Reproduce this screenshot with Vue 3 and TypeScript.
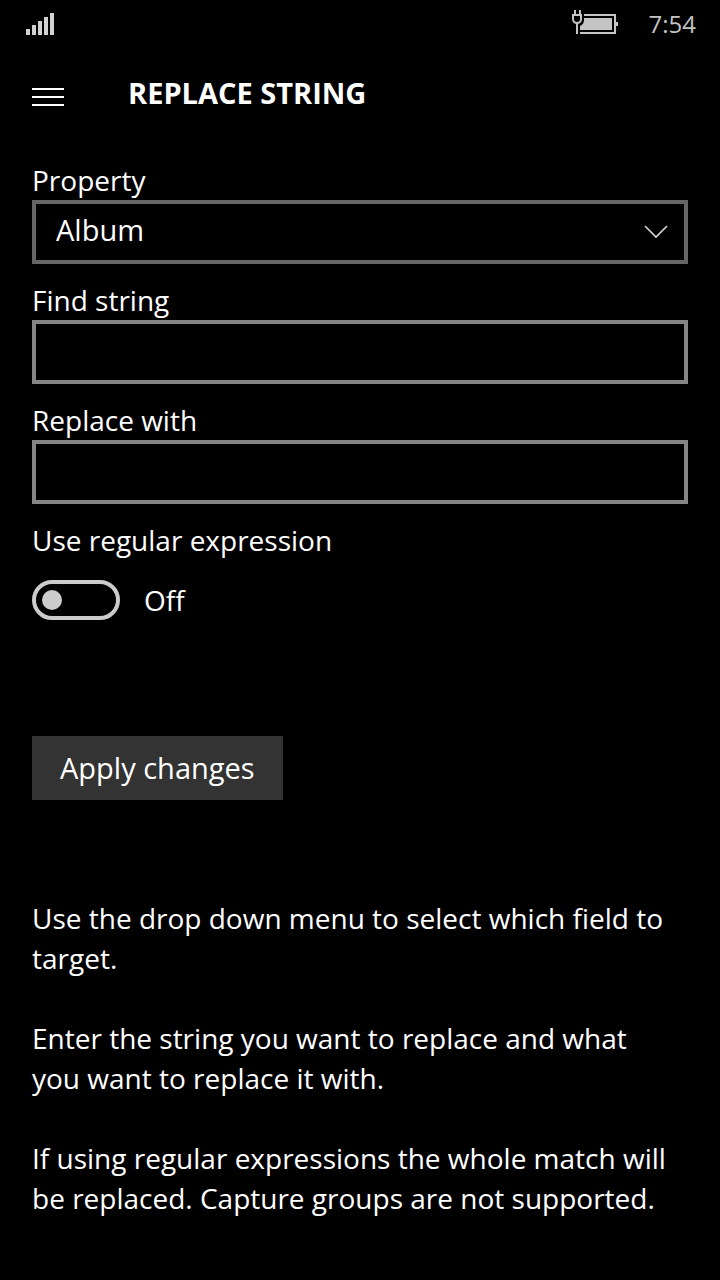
<script setup lang="ts">
import { ref } from 'vue'

const properties: string[] = ['Album', 'Artist', 'Title', 'Genre']
const property = ref<string>('Album')
const findText = ref<string>('')
const replaceText = ref<string>('')
const useRegex = ref<boolean>(false)

const help: string[] = [
  'Use the drop down menu to select which field to target.',
  'Enter the string you want to replace and what you want to replace it with.',
  'If using regular expressions the whole match will be replaced. Capture groups are not supported.',
]
</script>

<template>
  <div class="screen">
    <div class="status">
      <svg class="signal" width="28" height="22" viewBox="0 0 28 22" role="img" aria-label="Signal">
        <path d="M0 16h4v6H0zM6 12h4v10H6zM12 8h4v14h-4zM18 4h4v18h-4zM24 0h4v22h-4z" fill="#d2d2d2" />
      </svg>
      <svg class="battery" width="46" height="24" viewBox="0 0 46 24" role="img" aria-label="Battery charging">
        <g fill="#c4c4c4">
          <path d="M12 4h32v20H8v-2h34V6H12z" />
          <path d="M44 12h2v4h-2z" />
          <path d="M12 8h28v12H8v-4q4-2 4-6z" />
          <path d="M2 0h2v4h3V0h2v4h1v5q0 4-4 5v10H4V14q-4-1-4-5V4h2zM2 6v3q0 3 3 3t3-3V6z" fill-rule="evenodd" />
        </g>
      </svg>
      <time class="clock">7:54</time>
    </div>

    <header class="header">
      <button class="menu" type="button" aria-label="Menu">
        <svg width="32" height="18" viewBox="0 0 32 18" aria-hidden="true">
          <path d="M0 0h32v2H0zM0 8h32v2H0zM0 16h32v2H0z" fill="#fff" />
        </svg>
      </button>
      <h1>REPLACE STRING</h1>
    </header>

    <main>
      <form class="form" @submit.prevent>
        <div class="field">
          <label for="property">Property</label>
          <div class="select-wrap">
            <select id="property" v-model="property" class="box select">
              <option v-for="p in properties" :key="p">{{ p }}</option>
            </select>
            <svg class="chevron" width="24" height="14" viewBox="0 0 24 14" aria-hidden="true">
              <path d="M1 1l11 11L23 1" fill="none" stroke="#d8d8d8" stroke-width="1.600" />
            </svg>
          </div>
        </div>
        <div class="field">
          <label for="find">Find string</label>
          <input id="find" v-model="findText" class="box" type="text" />
        </div>
        <div class="field">
          <label for="replace">Replace with</label>
          <input id="replace" v-model="replaceText" class="box" type="text" />
        </div>
        <div class="field">
          <label for="regex">Use regular expression</label>
          <div class="toggle-row">
            <input id="regex" v-model="useRegex" class="toggle" type="checkbox" role="switch" />
            <span>{{ useRegex ? 'On' : 'Off' }}</span>
          </div>
        </div>
        <button class="apply" type="submit">Apply changes</button>
      </form>

      <section class="help">
        <p v-for="line in help" :key="line">{{ line }}</p>
      </section>
    </main>
  </div>
</template>

<style>
body {
  margin: 0;
  background: #000;
}
</style>

<style scoped>
.screen {
  min-height: 100vh;
  box-sizing: border-box;
  background: #000;
  color: #fff;
  font-family: "Segoe UI", "Open Sans", "Noto Sans", sans-serif;
  font-size: 28px;
  line-height: 40px;
}
.status {
  display: flex;
  align-items: center;
  height: 48px;
  padding: 0 24px 0 26px;
}
.battery {
  margin: 0 31px 4px auto;
}
.clock {
  color: #c4c4c4;
  font-size: 24px;
}
.header {
  display: flex;
  align-items: center;
  gap: 64px;
  padding: 25px 32px 0;
  height: 48px;
}
.menu {
  display: flex;
  padding: 0;
  border: 0;
  background: none;
}
h1 {
  margin: 0 0 8px;
  font-size: 29px;
  font-weight: 700;
}
.form {
  display: flex;
  flex-direction: column;
  gap: 16px;
  padding: 39px 32px 0;
}
.field {
  display: flex;
  flex-direction: column;
}
.box {
  box-sizing: border-box;
  width: 100%;
  height: 64px;
  padding: 0 20px;
  border: 4px solid #858585;
  border-radius: 0;
  background: #000;
  color: #fff;
  font: inherit;
  outline: none;
}
.select-wrap {
  display: flex;
  position: relative;
}
.select {
  appearance: none;
  padding-bottom: 4px;
  border-color: #666;
  font-size: 29px;
}
.chevron {
  position: absolute;
  right: 20px;
  top: 25px;
  pointer-events: none;
}
.toggle-row {
  display: flex;
  align-items: center;
  gap: 24px;
  padding-top: 20px;
}
.toggle {
  appearance: none;
  display: flex;
  align-items: center;
  box-sizing: border-box;
  width: 88px;
  height: 40px;
  margin: 0;
  padding: 0 6px;
  border: 4px solid #ccc;
  border-radius: 20px;
}
.toggle::before {
  content: "";
  width: 20px;
  height: 20px;
  border-radius: 50%;
  background: #ccc;
}
.toggle:checked {
  justify-content: flex-end;
}
.apply {
  align-self: flex-start;
  height: 64px;
  margin-top: 100px;
  padding: 0 28px;
  border: 0;
  background: #333;
  color: #fff;
  font: inherit;
  font-size: 29px;
}
.help {
  padding: 98px 40px 40px 32px;
}
.help p {
  margin: 0 0 40px;
}
.help p:last-child {
  margin: 0;
}
</style>
